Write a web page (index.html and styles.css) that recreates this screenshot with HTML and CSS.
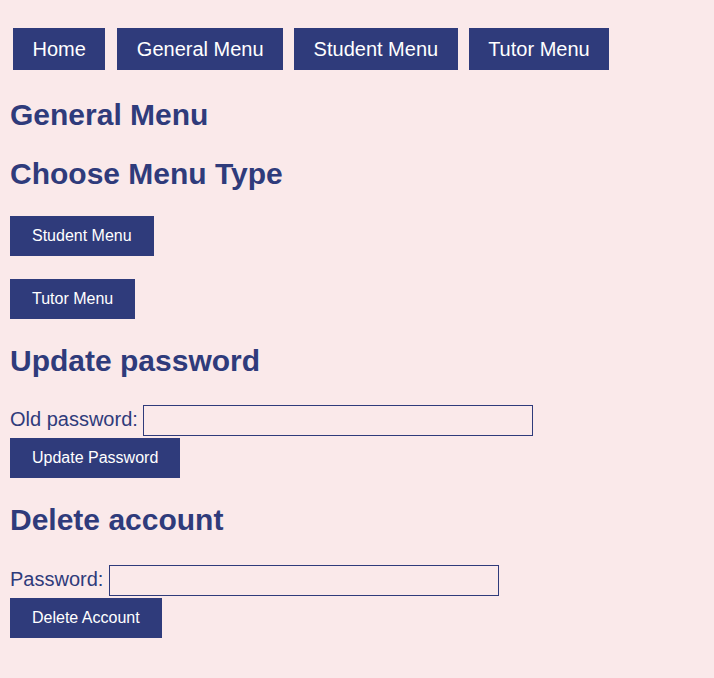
FILE: index.html
```html
<!DOCTYPE html>
<html lang="en">
<head>
<meta charset="utf-8">
<title>General Menu</title>
<link rel="stylesheet" href="styles.css">
</head>
<body>
<nav class="nav">
  <a class="nav-link" href="#">Home</a>
  <a class="nav-link" href="#">General Menu</a>
  <a class="nav-link" href="#">Student Menu</a>
  <a class="nav-link" href="#">Tutor Menu</a>
</nav>
<h2 class="title">General Menu</h2>
<h2 class="title">Choose Menu Type</h2>
<form class="stack"><button class="btn" type="button">Student Menu</button></form>
<form class="stack"><button class="btn" type="button">Tutor Menu</button></form>
<h2 class="title">Update password</h2>
<form class="form">
  <div class="row"><label class="label" for="old">Old password:</label> <input class="field" id="old" type="password"></div>
  <button class="btn" type="button">Update Password</button>
</form>
<h2 class="title">Delete account</h2>
<form class="form">
  <div class="row"><label class="label" for="pw">Password:</label> <input class="field" id="pw" type="password"></div>
  <button class="btn" type="button">Delete Account</button>
</form>
</body>
</html>
```
FILE: styles.css
```css
body {
  margin: 0;
  padding: 8px 10px;
  background: #fae9ea;
  color: #2f3b7b;
  font-family: "Liberation Sans", Arial, sans-serif;
}
.nav {
  display: flex;
  gap: 11px;
  margin: 20px 0 0 3px;
  padding-bottom: 3px;
}
.nav-link {
  display: block;
  height: 42px;
  line-height: 42px;
  padding: 0 19.5px;
  background: #2f3b7b;
  color: #fff;
  font-size: 20px;
  text-decoration: none;
}
.nav-link:first-child {
  margin-right: 1px;
}
.title {
  font-size: 30px;
  font-weight: bold;
  margin: 24.9px 0;
  line-height: normal;
}
.stack {
  margin: 0 0 23px;
}
.form {
  margin: 0;
}
.btn {
  display: block;
  height: 40px;
  padding: 0 22px;
  margin: 0;
  border: none;
  background: #2f3b7b;
  color: #fff;
  font-family: "Liberation Sans", Arial, sans-serif;
  font-size: 16px;
}
.row {
  font-size: 20px;
}
.label {
  color: #2f3b7b;
}
.field {
  box-sizing: border-box;
  width: 390px;
  height: 31px;
  margin: 3px 0 2px;
  border: 1px solid #2f3b7b;
  background: #fae9ea;
  vertical-align: baseline;
  font-size: 16px;
  padding: 0 4px;
}
```
